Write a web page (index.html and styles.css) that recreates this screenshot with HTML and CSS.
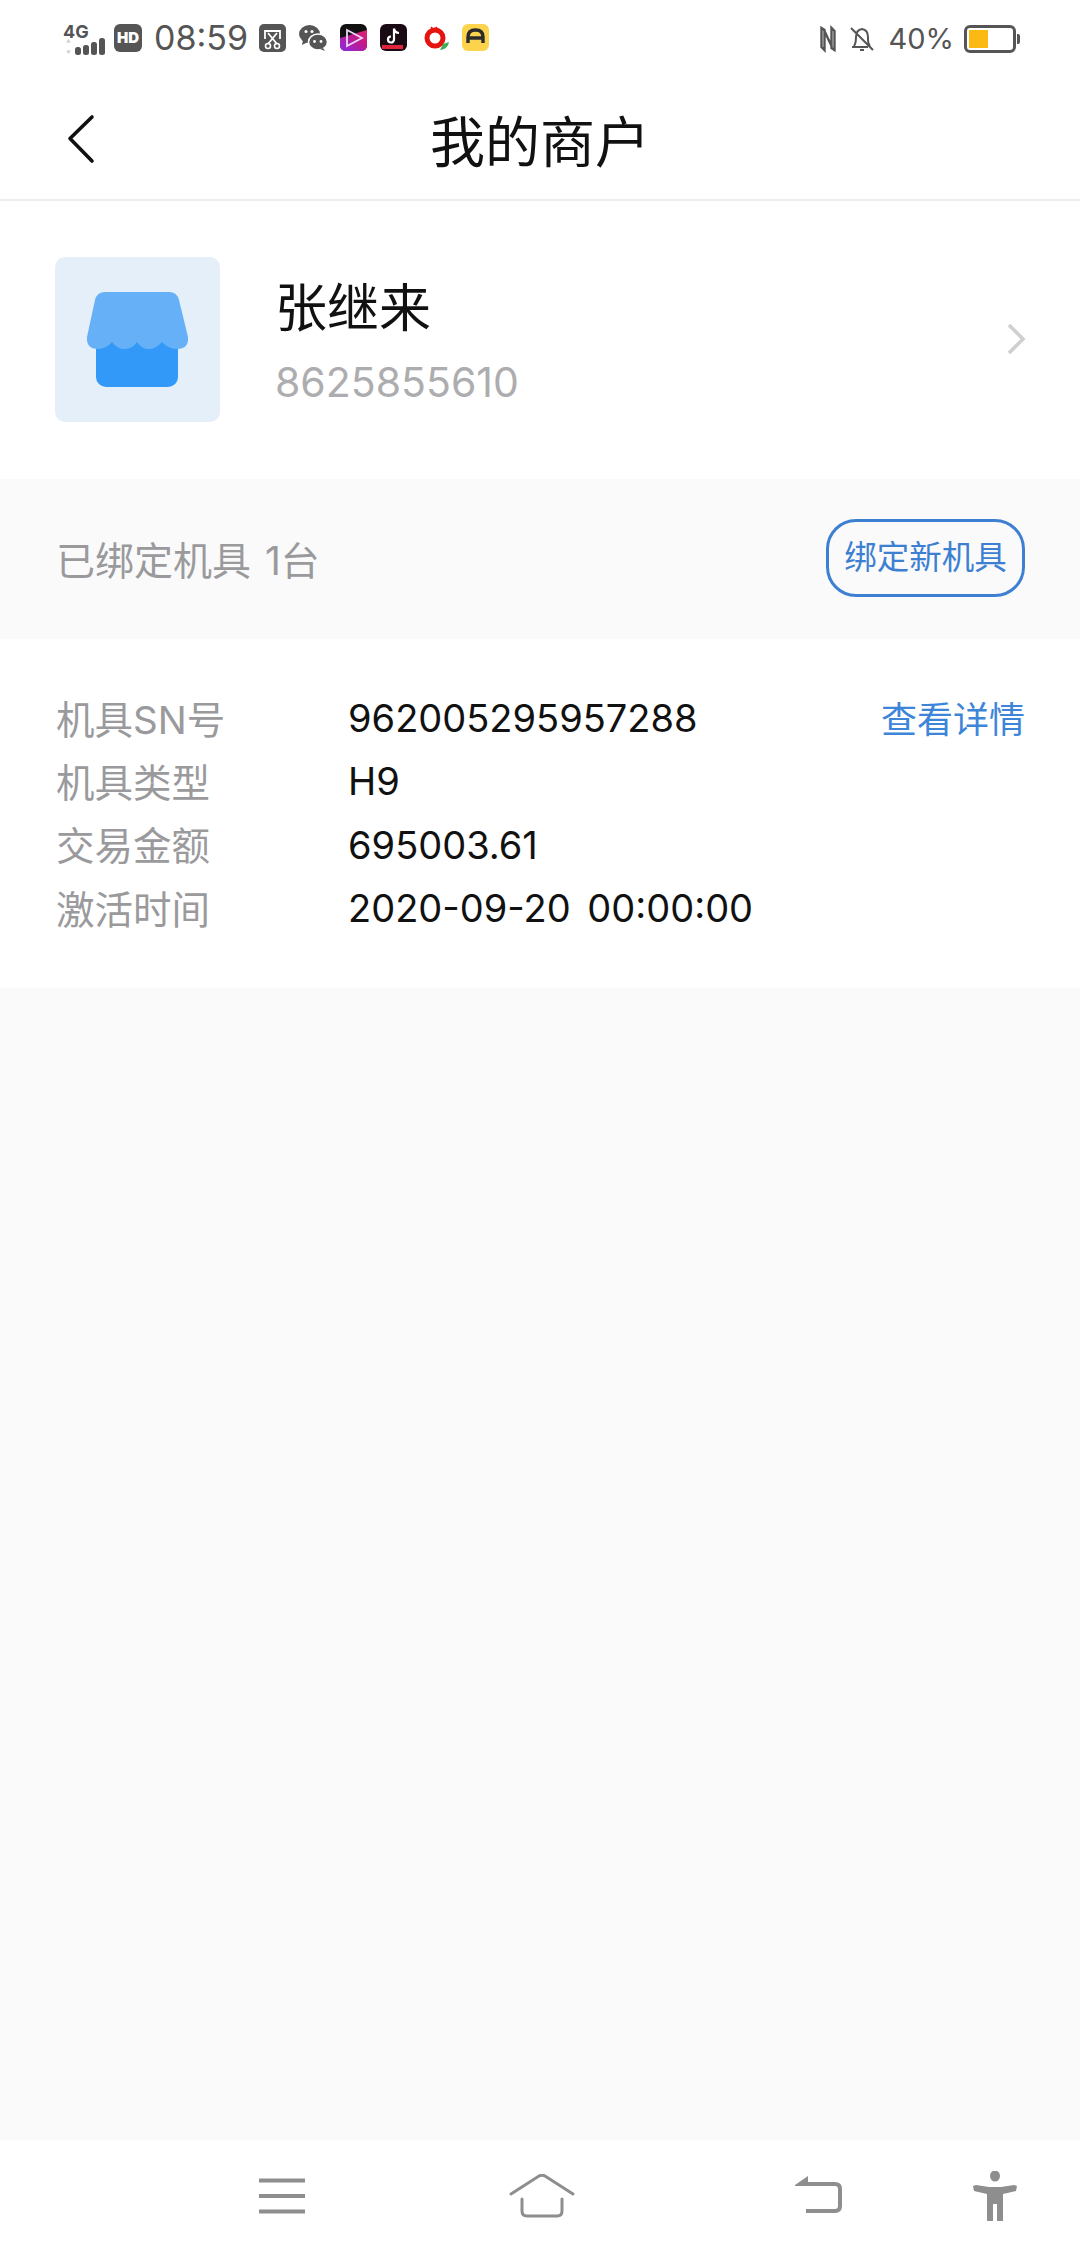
FILE: index.html
```html
<!DOCTYPE html>
<html lang="zh">
<head>
<meta charset="utf-8">
<title>我的商户</title>
<link rel="stylesheet" href="styles.css">
</head>
<body>
<div class="page">
  <div class="status">
    <div class="status-left">
      <div class="net">
        <span class="net-label">4G</span>
        <svg class="net-bars" width="44" height="18" viewBox="0 0 44 18"><path d="M3 4.500 L5.500 1 L8 4.500Z M3 12.500 L5.500 16 L8 12.500Z" fill="#cfcfcf"/><rect x="12" y="9" width="6" height="8" rx="2.500" fill="#555"/><rect x="20" y="7" width="6" height="10" rx="2.500" fill="#555"/><rect x="28" y="4" width="6" height="13" rx="2.500" fill="#555"/><rect x="36" y="0" width="6" height="17" rx="2.500" fill="#555"/></svg>
      </div>
      <span class="hd">HD</span>
      <span class="time">08:59</span>
      <svg class="app" width="27" height="28" viewBox="0 0 27 28"><rect width="27" height="28" rx="5" fill="#555"/><path d="M6 15V7h15v8M9 20l9-11M18 20L9 9" fill="none" stroke="#fff" stroke-width="1.800"/><circle cx="9" cy="22" r="2.500" fill="none" stroke="#fff" stroke-width="1.600"/><circle cx="18" cy="22" r="2.500" fill="none" stroke="#fff" stroke-width="1.600"/></svg>
      <svg class="app" width="28" height="28" viewBox="0 0 28 28"><ellipse cx="10.500" cy="10" rx="10.500" ry="9" fill="#555"/><path d="M4 16l-1 5 6-3z" fill="#555"/><ellipse cx="19" cy="18" rx="9.500" ry="8" fill="#555" stroke="#fff" stroke-width="1.500"/><path d="M24 24l2 3-5-2z" fill="#555"/><circle cx="7" cy="7.500" r="1.500" fill="#fff"/><circle cx="13" cy="7.500" r="1.500" fill="#fff"/><circle cx="15.500" cy="17.500" r="1.400" fill="#fff"/><circle cx="22" cy="17.500" r="1.400" fill="#fff"/></svg>
      <svg class="app" width="27" height="27" viewBox="0 0 27 27"><defs><linearGradient id="pp" x1="0" y1="1" x2="1" y2="0"><stop offset="0" stop-color="#8a2be2"/><stop offset="0.600" stop-color="#c2188c"/><stop offset="1" stop-color="#e0246a"/></linearGradient></defs><rect width="27" height="27" rx="6" fill="#111"/><path d="M0 14L27 6V21Q27 27 21 27H6Q0 27 0 21Z" fill="url(#pp)"/><path d="M7 6l15 8-15 8z" fill="none" stroke="#e8d8f5" stroke-width="1.800"/></svg>
      <svg class="app" width="27" height="27" viewBox="0 0 27 27"><rect width="27" height="27" rx="6" fill="#1a0a14"/><path d="M14 4.500v11a3 3 0 1 1-3-3M14 4.500q.5 4 5 4.500" fill="none" stroke="#fff" stroke-width="2.200"/><rect x="2" y="21" width="21" height="4" fill="#e0243c"/></svg>
      <svg class="app app-wide" width="25" height="27" viewBox="0 0 25 27"><circle cx="11" cy="14" r="8" fill="none" stroke="#e5140e" stroke-width="5"/><path d="M7 3l3 3 3-3" fill="none" stroke="#e5140e" stroke-width="1.500"/><path d="M16 26q8-1 9-8l-6 2z" fill="#3fae55"/></svg>
      <svg class="app" width="27" height="27" viewBox="0 0 27 27"><rect width="27" height="27" rx="6" fill="#fcd34d"/><path d="M6 19v-6q0-7 7.500-7T21 13v6M7 14h13" fill="none" stroke="#2b2b2b" stroke-width="3.400"/></svg>
    </div>
    <div class="status-right">
      <svg width="16" height="28" viewBox="0 0 16 28"><path d="M1.500 3l3 2v20l-3-3zM14.500 25l-3-2V3l3 3zM4 5l8 17" fill="none" stroke="#555" stroke-width="2.400"/></svg>
      <svg width="24" height="28" viewBox="0 0 24 28"><path d="M2 22h16M4 21q2-3 2-9 0-7 6-8 6 1 6 8v3q0 4 2 6M1 3l22 22M10 25h4" fill="none" stroke="#555" stroke-width="2"/></svg>
      <span class="pct">40%</span>
      <div class="battery"><div class="battery-fill"></div></div>
    </div>
  </div>

  <header class="topbar">
    <svg class="back" width="30" height="50" viewBox="0 0 30 50"><path d="M26 3L4 24.500 26 47" fill="none" stroke="#111" stroke-width="3.600" stroke-linecap="round" stroke-linejoin="round"/></svg>
    <h1 class="title">我的商户</h1>
  </header>

  <section class="merchant">
    <div class="avatar">
      <svg width="165" height="165" viewBox="0 0 165 165"><rect x="41" y="70" width="82" height="60" rx="10" fill="#3399f8"/><path d="M50 35H114Q122 35 124 43L133 80Q134 92 122 92 113 92 107 85 100 93 92 92 86 91 82 85 78 91 71 92 63 93 57 85 51 92 43 92 31 92 32 80L40 43Q42 35 50 35Z" fill="#65b0f7"/></svg>
    </div>
    <div class="merchant-info">
      <div class="merchant-name">张继来</div>
      <div class="merchant-phone">8625855610</div>
    </div>
    <svg class="chevron" width="20" height="34" viewBox="0 0 20 34"><path d="M3 3L17 17 3 31" fill="none" stroke="#cfcfd2" stroke-width="3.600"/></svg>
  </section>

  <section class="band">
    <span class="band-text">已绑定机具 1台</span>
    <span class="bind-btn">绑定新机具</span>
  </section>

  <section class="detail">
    <div class="row"><span class="label">机具SN号</span><span class="value">962005295957288</span><span class="link">查看详情</span></div>
    <div class="row"><span class="label">机具类型</span><span class="value">H9</span></div>
    <div class="row"><span class="label">交易金额</span><span class="value">695003.61</span></div>
    <div class="row"><span class="label">激活时间</span><span class="value">2020-09-20 00:00:00</span></div>
  </section>

  <div class="filler"></div>

  <nav class="navbar">
    <svg class="nav-menu" width="46" height="36" viewBox="0 0 46 36"><path d="M0 2.500H46M0 18H46M0 33.500H46" stroke="#8e8e8e" stroke-width="4"/></svg>
    <svg class="nav-home" width="66" height="44" viewBox="0 0 66 44"><path d="M2 20L30 2Q33 0.500 36 2L64 20M13 25V37Q13 42 18 42H48Q53 42 53 37V25" fill="none" stroke="#8e8e8e" stroke-width="3" stroke-linecap="round"/></svg>
    <svg class="nav-back" width="48" height="38" viewBox="0 0 48 38"><path d="M0 9L13 0V6H40Q47 6 47 13V30Q47 37 40 37H11V33H40Q43 33 43 30V13Q43 10 40 10H0Z" fill="#8e8e8e"/></svg>
    <svg class="nav-person" width="44" height="50" viewBox="0 0 44 50"><ellipse cx="22" cy="5" rx="5" ry="5.500" fill="#8e8e8e"/><path d="M0 15L3 14 16 16H28L41 14 44 15 43 20 30 23V50H24V33H20V50H14V23L1 20Z" fill="#8e8e8e"/></svg>
  </nav>
</div>
</body>
</html>
```

FILE: styles.css
```css
* { box-sizing: border-box; }
html, body { margin: 0; padding: 0; }
body {
  width: 1080px;
  height: 2256px;
  font-family: Inter, "Noto Sans CJK SC", sans-serif;
  background: #fff;
  overflow: hidden;
}
.page { display: flex; flex-direction: column; height: 2256px; }

.status {
  height: 76px;
  padding: 24px 64px 0 63px;
  display: flex;
  justify-content: space-between;
  align-items: flex-start;
  flex: none;
}
.status-left { display: flex; align-items: flex-start; }
.status-right { display: flex; align-items: flex-start; gap: 14px; padding-top: 1px; }
.net { width: 44px; display: flex; flex-direction: column; height: 32px; position: relative; }
.net-label { font-size: 18px; line-height: 15px; font-weight: 700; color: #555; }
.net-bars { display: block; margin-top: -1px; }
.hd {
  margin-left: 7px;
  width: 28px;
  height: 28px;
  border-radius: 6px;
  background: #555;
  color: #fff;
  font-size: 15px;
  font-weight: 900;
  line-height: 28px;
  text-align: center;
}
.time { margin-left: 12px; font-size: 34px; line-height: 28px; color: #555; width: 92px; }
.app { display: block; margin-left: 13px; flex: none; }
.app-wide { margin-left: 17px; }
.pct { font-size: 29px; line-height: 28px; color: #555; margin-right: -4px; }
.battery {
  width: 52px;
  height: 28px;
  border: 3px solid #555;
  border-radius: 6px;
  padding: 2px;
  position: relative;
}
.battery::after {
  content: "";
  position: absolute;
  right: -7px;
  top: 6px;
  width: 3px;
  height: 10px;
  background: #555;
  border-radius: 0 2px 2px 0;
}
.battery-fill { width: 19px; height: 100%; background: #fdb913; }

.topbar {
  height: 125px;
  flex: none;
  position: relative;
  display: flex;
  align-items: center;
  justify-content: center;
  border-bottom: 2px solid #ececec;
  padding: 8px 0 0;
}
.back { position: absolute; left: 66px; top: 38px; }
.title { margin: 0; font-size: 55px; font-weight: 400; color: #111; line-height: 64px; }

.merchant {
  height: 278px;
  flex: none;
  display: flex;
  align-items: center;
  padding: 0 54px 2px 55px;
}
.avatar {
  width: 165px;
  height: 165px;
  background: #e4effa;
  border-radius: 10px;
  flex: none;
}
.avatar svg { display: block; }
.merchant-info { margin-left: 55px; flex: 1; padding-top: 8px; }
.merchant-name { font-size: 52px; line-height: 60px; color: #111; }
.merchant-phone { font-size: 41px; line-height: 50px; color: #adadb0; margin-top: 18px; }
.chevron { display: block; }

.band {
  height: 160px;
  flex: none;
  background: #fafafb;
  display: flex;
  align-items: center;
  justify-content: space-between;
  padding: 0 55px 3px 56px;
}
.band-text { font-size: 39px; color: #9a9a9d; word-spacing: 3px; }
.bind-btn {
  width: 199px;
  height: 78px;
  border: 3px solid #3d80d2;
  border-radius: 30px;
  color: #3d80d2;
  font-size: 32.500px;
  line-height: 72px;
  text-align: center;
}

.detail {
  height: 349px;
  flex: none;
  padding: 46px 55px 0 56px;
}
.row { display: flex; align-items: center; height: 63.300px; }
.label { width: 292px; font-size: 38.500px; color: #9a9a9d; flex: none; }
.value { flex: 1; font-size: 38px; color: #111; word-spacing: 6px; padding-top: 3px; }
.link { font-size: 36px; color: #3d85d8; }

.filler { flex: 1; background: #fafafb; }

.navbar {
  height: 116px;
  flex: none;
  background: #fff;
  display: flex;
  align-items: flex-start;
  padding: 34px 0 0 259px;
}
.navbar svg { display: block; flex: none; }
.nav-menu { margin-top: 4px; }
.nav-home { margin-left: 204px; }
.nav-back { margin-left: 220px; margin-top: 2px; }
.nav-person { margin-left: 130px; margin-top: -3px; }
```
